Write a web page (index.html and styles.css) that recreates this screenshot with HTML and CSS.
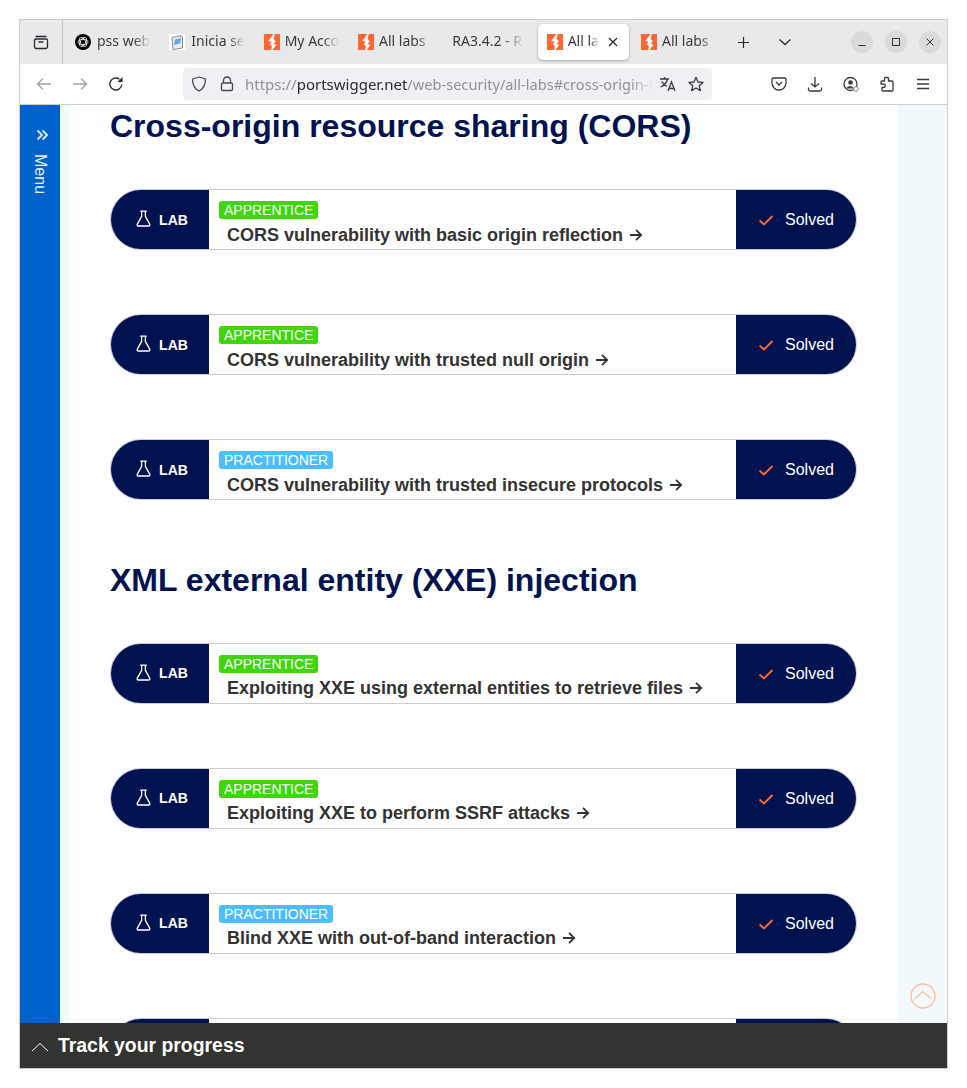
FILE: index.html
```html
<!DOCTYPE html>
<html lang="en">
<head>
<meta charset="utf-8">
<title>All labs | Web Security Academy</title>
<link rel="stylesheet" href="styles.css">
</head>
<body>
<svg class="defs" width="0" height="0" aria-hidden="true">
  <defs>
    <symbol id="ps" viewBox="0 0 16 16">
      <rect width="16" height="16" fill="#ff6633"/>
      <path d="M9.500 0 4.200 7.200h3.400L6 10.200l2 2.200L7 16h1.600l3.900-5.600-3-.1 2.200-3.100-2.200-2.300L10.800 0z" fill="#fff"/>
    </symbol>
    <symbol id="flask" viewBox="0 0 16 18">
      <path d="M5 1.200h6M6 1.200v5.600L1.400 15a1.300 1.300 0 0 0 1.100 2h11a1.300 1.300 0 0 0 1.100-2L10 6.800V1.200" fill="none" stroke="#fff" stroke-width="1.400" stroke-linejoin="round" stroke-linecap="round"/>
    </symbol>
    <symbol id="check" viewBox="0 0 16 12">
      <path d="M1.500 6.500 6 10.500 14.500 2" fill="none" stroke="#ff6633" stroke-width="2"/>
    </symbol>
    <symbol id="arrow" viewBox="0 0 14 14">
      <path d="M1 7h11M7 1.800 12.200 7 7 12.200" fill="none" stroke="#333332" stroke-width="1.800"/>
    </symbol>
  </defs>
</svg>
<div class="window">
  <header class="tabbar">
    <div class="tabview">
      <svg class="ico" viewBox="0 0 16 16"><path d="M3 2.500h10M1.500 6.200a1.200 1.200 0 0 1 1.200-1.200h10.600a1.200 1.200 0 0 1 1.200 1.200v6.600a1.700 1.700 0 0 1-1.700 1.700H3.200a1.700 1.700 0 0 1-1.700-1.700zM6 8h4" fill="none" stroke="#2b2a33" stroke-width="1.300" stroke-linecap="round"/></svg>
    </div>
    <div class="tabs">
      <div class="tab tab-loose">
        <svg class="fav" viewBox="0 0 16 16"><circle cx="8" cy="8" r="8" fill="#000"/><g fill="none" stroke="#fff" stroke-width=".8"><ellipse cx="8" cy="8" rx="5" ry="2.600"/><ellipse cx="8" cy="8" rx="5" ry="2.600" transform="rotate(60 8 8)"/><ellipse cx="8" cy="8" rx="5" ry="2.600" transform="rotate(120 8 8)"/></g></svg>
        <span class="tab-label">pss web</span>
      </div>
      <div class="tab tab-loose">
        <svg class="fav" viewBox="0 0 16 16"><rect width="16" height="16" fill="#fff"/><path d="M3 3.500 12 1.500v1.500h1.500V14L4 15.500z" fill="#e8edf5" stroke="#6b7280" stroke-width=".8"/><path d="M6 5.500l6.500-1.500-1.500 5.500-6 1.500z" fill="#6aa5e8"/></svg>
        <span class="tab-label">Inicia sesión</span>
      </div>
      <div class="tab">
        <svg class="fav"><use href="#ps"/></svg>
        <span class="tab-label">My Account</span>
      </div>
      <div class="tab">
        <svg class="fav"><use href="#ps"/></svg>
        <span class="tab-label">All labs | Web</span>
      </div>
      <div class="tab tab-plain">
        <span class="tab-label">RA3.4.2 - Realiza</span>
      </div>
      <div class="tab tab-active">
        <svg class="fav"><use href="#ps"/></svg>
        <span class="tab-label tab-label-short">All labs | Web</span>
        <svg class="tab-close" viewBox="0 0 10 10"><path d="M1 1l8 8M9 1l-8 8" stroke="#2b2a33" stroke-width="1.300"/></svg>
      </div>
      <div class="tab">
        <svg class="fav"><use href="#ps"/></svg>
        <span class="tab-label">All labs | Web</span>
      </div>
    </div>
    <svg class="newtab" viewBox="0 0 14 14"><path d="M7 1v12M1 7h12" stroke="#2b2a33" stroke-width="1.300"/></svg>
    <svg class="tablist" viewBox="0 0 14 8"><path d="M1.500 1.500 7 6.500l5.500-5" fill="none" stroke="#2b2a33" stroke-width="1.300"/></svg>
    <div class="winbtns">
      <div class="winbtn"><svg viewBox="0 0 10 10"><path d="M1.500 8.500h7" stroke="#333" stroke-width="1"/></svg></div>
      <div class="winbtn"><svg viewBox="0 0 10 10"><rect x="1.500" y="1.500" width="7" height="7" fill="none" stroke="#333" stroke-width="1"/></svg></div>
      <div class="winbtn"><svg viewBox="0 0 10 10"><path d="M1.500 1.500l7 7M8.500 1.500l-7 7" stroke="#333" stroke-width="1"/></svg></div>
    </div>
  </header>
  <nav class="toolbar">
    <svg class="nav-ico nav-back" viewBox="0 0 16 16"><path d="M15 8H1.500M7 2.500 1.500 8 7 13.500" fill="none" stroke="#a3a3a8" stroke-width="1.300"/></svg>
    <svg class="nav-ico nav-fwd" viewBox="0 0 16 16"><path d="M1 8h13.500M9 2.500 14.500 8 9 13.500" fill="none" stroke="#a3a3a8" stroke-width="1.300"/></svg>
    <svg class="nav-ico nav-reload" viewBox="0 0 16 16"><path d="M13.800 8.500A6 6 0 1 1 11.500 3.200" fill="none" stroke="#2b2a33" stroke-width="1.400"/><path d="M14.500 1v5h-5z" fill="#2b2a33"/></svg>
    <div class="urlbar">
      <svg class="url-ico url-shield" viewBox="0 0 16 16"><path d="M8 1 14.500 3c0 6-1.500 9.500-6.500 12C3 12.500 1.500 9 1.500 3z" fill="none" stroke="#45454d" stroke-width="1.300" stroke-linejoin="round"/></svg>
      <svg class="url-ico url-lock" viewBox="0 0 16 16"><path d="M4.500 7V4.500a3.500 3.500 0 0 1 7 0V7M3.700 7h8.600a1.200 1.200 0 0 1 1.200 1.200v5.100a1.200 1.200 0 0 1-1.200 1.200H3.700a1.200 1.200 0 0 1-1.200-1.200V8.200A1.200 1.200 0 0 1 3.700 7z" fill="none" stroke="#45454d" stroke-width="1.300"/></svg>
      <div class="url"><span class="url-dim">https://</span><span class="url-host">portswigger.net</span><span class="url-dim url-path">/web-security/all-labs#cross-origin-resource-sharing-cors</span></div>
      <svg class="url-ico url-trans" viewBox="0 0 18 16"><path d="M1 3h9M5.500 1v2M8.500 3C7.500 7 5 9.500 1.500 11M2.800 5.500C4 8 6 9.500 8 10.500M9 15l3.500-9L16 15M10.200 12.500h4.600" fill="none" stroke="#3a3a42" stroke-width="1.300"/></svg>
      <svg class="url-ico url-star" viewBox="0 0 16 16"><path d="M8 1.300 10 6l5 .4-3.800 3.300 1.200 4.900L8 12l-4.400 2.600 1.200-4.900L1 6.400 6 6z" fill="none" stroke="#3a3a42" stroke-width="1.300" stroke-linejoin="round"/></svg>
    </div>
    <div class="tools">
      <svg class="nav-ico" viewBox="0 0 16 16"><path d="M2.500 2h11A1.500 1.500 0 0 1 15 3.500V7a7 7 0 0 1-14 0V3.500A1.500 1.500 0 0 1 2.500 2zM5 6l3 3 3-3" fill="none" stroke="#3a3a42" stroke-width="1.300"/></svg>
      <svg class="nav-ico" viewBox="0 0 16 16"><path d="M8 1v10M4 7.500 8 11l4-3.500M1.500 11.500v2A1.500 1.500 0 0 0 3 15h10a1.500 1.500 0 0 0 1.500-1.500v-2" fill="none" stroke="#3a3a42" stroke-width="1.300"/></svg>
      <svg class="nav-ico" viewBox="0 0 16 16"><circle cx="7.500" cy="8" r="6.500" fill="none" stroke="#3a3a42" stroke-width="1.300"/><circle cx="7.500" cy="6.500" r="2.300" fill="#3a3a42"/><path d="M3.500 12.500c1-2.500 6-2.500 7 0" fill="#3a3a42" stroke="#3a3a42"/><circle cx="13" cy="13" r="2.300" fill="#fff" stroke="#8a8a90"/></svg>
      <svg class="nav-ico" viewBox="0 0 16 16"><path d="M6 1.500h2.500a1 1 0 0 1 1 1V5H13a1 1 0 0 1 1 1v8a1 1 0 0 1-1 1H4a1 1 0 0 1-1-1v-2.500h1.500a1.500 1.500 0 0 0 0-3.500H2V6a1 1 0 0 1 1-1h2.500V3a1.500 1.500 0 0 1 .5-1.500z" fill="none" stroke="#3a3a42" stroke-width="1.300" stroke-linejoin="round"/></svg>
      <svg class="nav-ico" viewBox="0 0 16 16"><path d="M2 3.500h12M2 8h12M2 12.500h12" stroke="#3a3a42" stroke-width="1.300"/></svg>
    </div>
  </nav>
  <div class="page">
    <aside class="sidebar">
      <svg class="menu-chev" viewBox="0 0 12 12"><path d="M1.500 1.500 6 6l-4.500 4.500M6.500 1.500 11 6l-4.500 4.500" fill="none" stroke="#cfe2f7" stroke-width="2"/></svg>
      <span class="menu-label">Menu</span>
    </aside>
    <div class="band-left"></div>
    <main class="content">
      <h2>Cross-origin resource sharing (CORS)</h2>
      <div class="labs">
        <div class="lab">
          <div class="lab-tag"><svg class="flask"><use href="#flask"/></svg><span>LAB</span></div>
          <div class="lab-body"><span class="badge badge-green">APPRENTICE</span><a class="lab-title">CORS vulnerability with basic origin reflection<svg class="arrow"><use href="#arrow"/></svg></a></div>
          <div class="lab-status"><svg class="check"><use href="#check"/></svg><span>Solved</span></div>
        </div>
        <div class="lab">
          <div class="lab-tag"><svg class="flask"><use href="#flask"/></svg><span>LAB</span></div>
          <div class="lab-body"><span class="badge badge-green">APPRENTICE</span><a class="lab-title">CORS vulnerability with trusted null origin<svg class="arrow"><use href="#arrow"/></svg></a></div>
          <div class="lab-status"><svg class="check"><use href="#check"/></svg><span>Solved</span></div>
        </div>
        <div class="lab">
          <div class="lab-tag"><svg class="flask"><use href="#flask"/></svg><span>LAB</span></div>
          <div class="lab-body"><span class="badge badge-blue">PRACTITIONER</span><a class="lab-title">CORS vulnerability with trusted insecure protocols<svg class="arrow"><use href="#arrow"/></svg></a></div>
          <div class="lab-status"><svg class="check"><use href="#check"/></svg><span>Solved</span></div>
        </div>
      </div>
      <h2 class="h2-next">XML external entity (XXE) injection</h2>
      <div class="labs labs-tight">
        <div class="lab">
          <div class="lab-tag"><svg class="flask"><use href="#flask"/></svg><span>LAB</span></div>
          <div class="lab-body"><span class="badge badge-green">APPRENTICE</span><a class="lab-title">Exploiting XXE using external entities to retrieve files<svg class="arrow"><use href="#arrow"/></svg></a></div>
          <div class="lab-status"><svg class="check"><use href="#check"/></svg><span>Solved</span></div>
        </div>
        <div class="lab">
          <div class="lab-tag"><svg class="flask"><use href="#flask"/></svg><span>LAB</span></div>
          <div class="lab-body"><span class="badge badge-green">APPRENTICE</span><a class="lab-title">Exploiting XXE to perform SSRF attacks<svg class="arrow"><use href="#arrow"/></svg></a></div>
          <div class="lab-status"><svg class="check"><use href="#check"/></svg><span>Solved</span></div>
        </div>
        <div class="lab">
          <div class="lab-tag"><svg class="flask"><use href="#flask"/></svg><span>LAB</span></div>
          <div class="lab-body"><span class="badge badge-blue">PRACTITIONER</span><a class="lab-title">Blind XXE with out-of-band interaction<svg class="arrow"><use href="#arrow"/></svg></a></div>
          <div class="lab-status"><svg class="check"><use href="#check"/></svg><span>Solved</span></div>
        </div>
        <div class="lab">
          <div class="lab-tag"></div>
          <div class="lab-body"></div>
          <div class="lab-status"></div>
        </div>
      </div>
    </main>
    <div class="band-right"></div>
    <svg class="scroll-top" viewBox="0 0 26 26"><circle cx="13" cy="13" r="12" fill="none" stroke="#ffb8a0" stroke-width="1.300"/><path d="M5 15.500 13 8.500l8 7" fill="none" stroke="#ffb8a0" stroke-width="1.300"/></svg>
    <div class="progress">
      <svg class="progress-chev" viewBox="0 0 18 10"><path d="M1 9 9 1.500 17 9" fill="none" stroke="#fff" stroke-width="1"/></svg>
      <span>Track your progress</span>
    </div>
  </div>
</div>
</body>
</html>
```
FILE: styles.css
```css
* { box-sizing: border-box; }
html, body { margin: 0; height: 100%; }
body { background: #fff; padding: 19px; font-family: "Liberation Sans", Arial, sans-serif; overflow: hidden; }
.defs { position: absolute; }
.window { width: 929px; height: 1050px; border: 1px solid #cfcfcf; display: flex; flex-direction: column; overflow: hidden; background: #fff; }

.tabbar { height: 44px; flex: none; background: #e9e9e9; display: flex; align-items: center; font-family: "Noto Sans", sans-serif; color: #3a3a42; }
.tabview { width: 43px; height: 44px; flex: none; border-right: 1px solid #c4c4c4; display: flex; align-items: center; justify-content: center; }
.ico { width: 16px; height: 16px; }
.tabs { display: flex; margin-left: 3px; height: 40px; }
.tab { width: 94.33px; height: 36px; margin-top: 2px; padding-left: 9px; display: flex; flex: none; align-items: center; gap: 5px; font-size: 14px; border-radius: 5px; }
.tab-loose { gap: 6px; }
.tab-plain { padding-right: 4px; }
.fav { width: 16px; height: 16px; flex: none; }
.tab-label { flex: 1 1 0; min-width: 0; white-space: nowrap; overflow: hidden; margin-right: 10px; margin-bottom: 3px; -webkit-mask-image: linear-gradient(to right, #000 70%, transparent 100%); mask-image: linear-gradient(to right, #000 70%, transparent 100%); }
.tab-active { width: 91px; margin-right: 3.33px; background: #fff; box-shadow: 0 1px 3px rgba(0,0,0,.3); padding-right: 11px; }
.tab-label-short { margin-right: 0; }
.tab-close { width: 10px; height: 10px; flex: none; margin-left: 4px; }
.newtab { width: 13px; height: 13px; margin-left: 11px; flex: none; }
.tablist { width: 14px; height: 8px; margin-left: 28px; flex: none; }
.winbtns { margin-left: auto; margin-right: 6px; display: flex; gap: 12px; }
.winbtn { width: 22px; height: 22px; border-radius: 50%; background: #dadada; display: flex; align-items: center; justify-content: center; }
.winbtn svg { width: 10px; height: 10px; }

.toolbar { height: 41px; flex: none; background: #fff; border-bottom: 1px solid #cfcfcf; display: flex; align-items: center; font-family: "Noto Sans", sans-serif; }
.nav-ico { width: 16px; height: 16px; flex: none; }
.nav-back { margin-left: 16px; }
.nav-fwd { margin-left: 20px; }
.nav-reload { margin-left: 20px; }
.urlbar { width: 529px; height: 32px; margin-left: 59px; background: #f0f0f4; border-radius: 4px; display: flex; align-items: center; padding: 0 8px; }
.url-ico { width: 16px; height: 16px; flex: none; }
.url-lock { margin-left: 12px; }
.url { flex: 1 1 0; min-width: 0; margin-left: 10px; font-size: 15px; white-space: nowrap; overflow: hidden; -webkit-mask-image: linear-gradient(to right, #000 94%, transparent 100%); mask-image: linear-gradient(to right, #000 94%, transparent 100%); }
.url-dim { color: #8f8f95; }
.url-path { font-size: 14.6px; }
.url-host { color: #2b2a33; }
.url-trans { width: 18px; margin-left: 5px; }
.url-star { margin-left: 11px; }
.tools { margin-left: auto; margin-right: 16px; display: flex; gap: 20px; }

.page { flex: 1 1 0; min-height: 0; position: relative; display: flex; overflow: hidden; background: #fff; }
.sidebar { width: 40px; flex: none; background: #0062cc; display: flex; flex-direction: column; align-items: center; padding-top: 24px; color: #e6f0fb; }
.menu-chev { width: 12px; height: 12px; margin-left: 4px; }
.menu-label { writing-mode: vertical-rl; font-size: 16px; margin-top: 13px; }
.band-left { width: 10px; flex: none; background: #f3fafc; }
.band-right { width: 50px; flex: none; background: #f3fafc; }
.content { flex: 1 1 0; min-width: 0; padding: 2px 40px 0; }
h2 { margin: 0 0 44px; font-size: 32px; line-height: 38px; font-weight: 700; color: #00124f; }
.h2-next { margin-top: 61px; }
.labs { display: flex; flex-direction: column; gap: 64px; }
.lab { height: 61px; flex: none; display: flex; border: 1px solid #c9cdd0; border-radius: 31px; overflow: hidden; }
.lab-tag { width: 98px; flex: none; background: #00124f; display: flex; align-items: center; justify-content: center; gap: 8px; padding-left: 4px; color: #fff; font-weight: 700; font-size: 14px; }
.labs-tight .lab-tag span { margin-bottom: 2px; }
.flask { width: 15px; height: 17px; margin-top: -3px; }
.lab-body { flex: 1 1 0; min-width: 0; padding: 11px 0 0 10px; display: flex; flex-direction: column; align-items: flex-start; }
.badge { height: 18px; line-height: 18px; padding: 0 5px; border-radius: 3px; color: #fff; font-size: 14px; }
.badge-green { background: #3fd60b; }
.badge-blue { background: #4cbdff; }
.lab-title { margin: 5px 0 0 8px; font-size: 18px; line-height: 22px; font-weight: 700; color: #333332; display: flex; align-items: center; white-space: nowrap; }
.labs-tight .lab-title { margin-top: 4px; }
.arrow { width: 14px; height: 14px; margin-left: 6px; }
.lab-status { width: 120px; flex: none; background: #00124f; display: flex; align-items: center; gap: 11px; padding-left: 22px; color: #fff; font-size: 16px; }
.check { width: 16px; height: 12px; margin-top: 1px; }

.scroll-top { position: absolute; right: 11px; bottom: 59px; width: 26px; height: 26px; }
.progress { position: absolute; left: 0; right: 0; bottom: 0; height: 45px; background: #333332; color: #fff; display: flex; align-items: center; padding-left: 11px; gap: 9px; font-size: 19.4px; font-weight: 700; }
.progress-chev { width: 18px; height: 10px; margin-top: 2px; }
```
